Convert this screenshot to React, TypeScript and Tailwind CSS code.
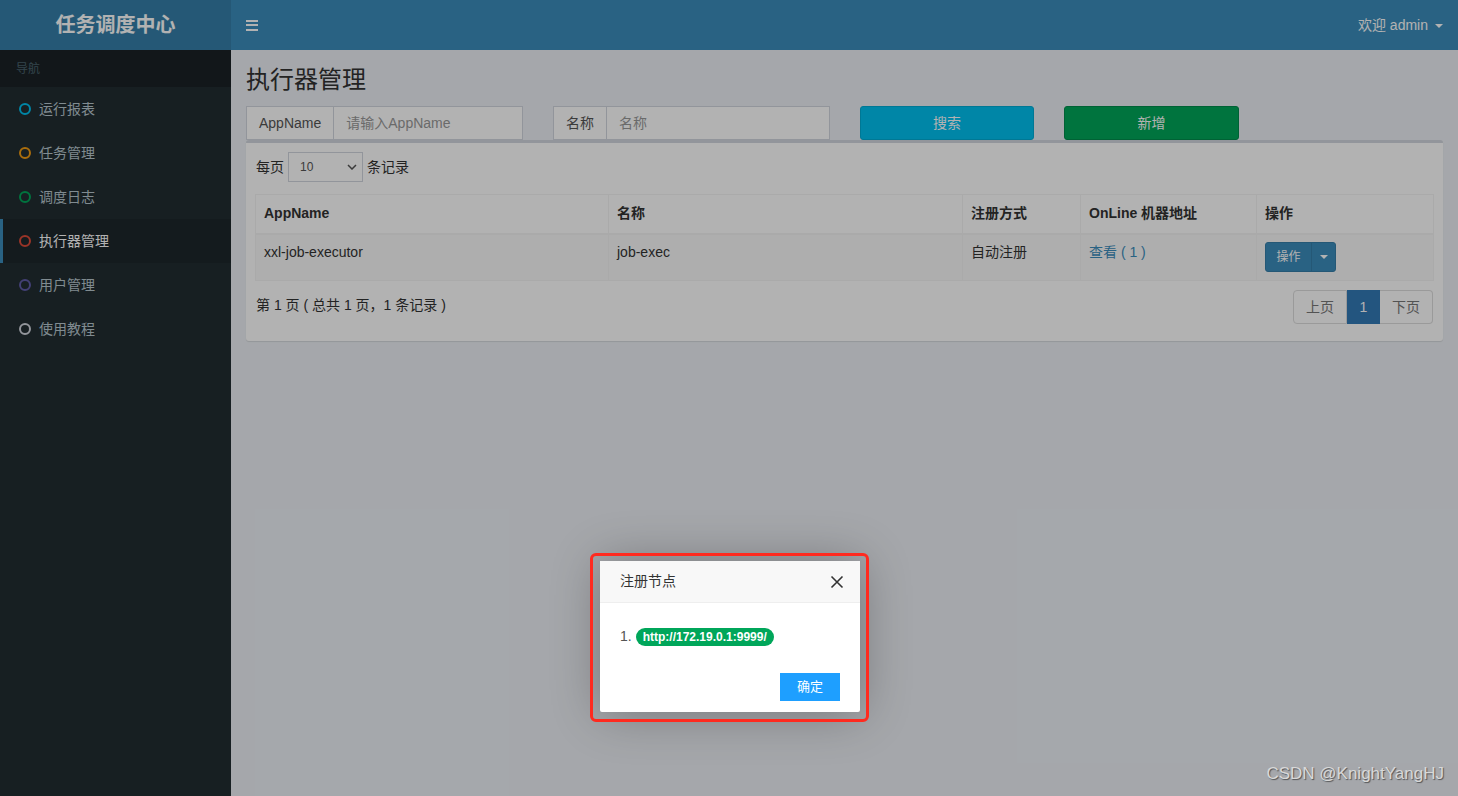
import React from "react";

const font = { fontFamily: '"Liberation Sans", "Noto Sans CJK SC", sans-serif' };

const navItems = [
  { label: "运行报表", ring: "border-[#00c0ef]" },
  { label: "任务管理", ring: "border-[#f39c12]" },
  { label: "调度日志", ring: "border-[#00a65a]" },
  { label: "执行器管理", ring: "border-[#dd4b39]", active: true },
  { label: "用户管理", ring: "border-[#605ca8]" },
  { label: "使用教程", ring: "border-[#d2d6de]" },
];

function Sidebar() {
  return (
    <aside className="w-[231px] shrink-0 bg-[#222d32] flex flex-col">
      <div className="h-[50px] bg-[#367fa9] flex items-center justify-center text-white text-[20px] font-bold">
        任务调度中心
      </div>
      <div className="h-[37px] bg-[#1a2226] text-[#4b646f] text-[12px] flex items-center pl-[16px]">导航</div>
      <ul>
        {navItems.map((item) => (
          <li
            key={item.label}
            className={
              "h-[44px] flex items-center text-[14px] border-l-[3px] " +
              (item.active
                ? "bg-[#1e282c] border-[#3c8dbc] text-white"
                : "border-transparent text-[#b8c7ce]")
            }
          >
            <span className={"ml-[16px] w-[12px] h-[12px] rounded-full border-2 " + item.ring}></span>
            <span className="ml-[8px]">{item.label}</span>
          </li>
        ))}
      </ul>
    </aside>
  );
}

function TopBar() {
  return (
    <header className="h-[50px] bg-[#3c8dbc] flex items-center justify-between pl-[15px] pr-[15px] text-white">
      <div className="flex flex-col gap-[2.5px] w-[12px]">
        <span className="h-[2px] bg-white"></span>
        <span className="h-[2px] bg-white"></span>
        <span className="h-[2px] bg-white"></span>
      </div>
      <div className="flex items-center text-[14px] gap-[7px]">
        <span>欢迎 admin</span>
        <span className="w-0 h-0 border-l-[4px] border-r-[4px] border-t-[4px] border-l-transparent border-r-transparent border-t-white mt-[1px]"></span>
      </div>
    </header>
  );
}

function SearchRow() {
  return (
    <div className="flex items-stretch h-[34px] text-[14px]">
      <div className="w-[277px] flex border border-[#d2d6de] bg-white">
        <span className="px-[12px] flex items-center border-r border-[#d2d6de] text-[#555]">AppName</span>
        <span className="px-[12px] flex items-center text-[#999]">请输入AppName</span>
      </div>
      <div className="w-[277px] ml-[30px] flex border border-[#d2d6de] bg-white">
        <span className="px-[12px] flex items-center border-r border-[#d2d6de] text-[#555]">名称</span>
        <span className="px-[12px] flex items-center text-[#999]">名称</span>
      </div>
      <button className="w-[174px] ml-[30px] bg-[#00c0ef] border border-[#00acd6] rounded-[3px] text-white">搜索</button>
      <button className="w-[175px] ml-[30px] bg-[#00a65a] border border-[#008d4c] rounded-[3px] text-white">新增</button>
    </div>
  );
}

function Table() {
  const th = "border border-[#f4f4f4] border-b-2 text-left font-bold px-[8px] h-[39px]";
  const td = "border border-[#f4f4f4] px-[8px] pt-[7px] align-top h-[47px]";
  return (
    <table className="w-full border-collapse border border-[#f4f4f4] text-[14px] text-[#333] mt-[12px] table-fixed">
      <colgroup>
        <col className="w-[353px]" />
        <col className="w-[354px]" />
        <col className="w-[118px]" />
        <col className="w-[176px]" />
        <col className="w-[177px]" />
      </colgroup>
      <thead>
        <tr>
          <th className={th}>AppName</th>
          <th className={th}>名称</th>
          <th className={th}>注册方式</th>
          <th className={th}>OnLine 机器地址</th>
          <th className={th}>操作</th>
        </tr>
      </thead>
      <tbody>
        <tr className="bg-[#f9f9f9]">
          <td className={td}>xxl-job-executor</td>
          <td className={td}>job-exec</td>
          <td className={td}>自动注册</td>
          <td className={td}>
            <span className="text-[#3c8dbc]">查看 ( 1 )</span>
          </td>
          <td className="border border-[#f4f4f4] px-[8px] align-top pt-[7px]">
            <div className="inline-flex h-[30px] rounded-[3px] overflow-hidden bg-[#3c8dbc] text-white text-[12px] border border-[#367fa9]">
              <span className="w-[45px] flex items-center justify-center">操作</span>
              <span className="w-[24px] flex items-center justify-center border-l border-[#367fa9]">
                <span className="w-0 h-0 border-l-[4px] border-r-[4px] border-t-[4px] border-l-transparent border-r-transparent border-t-white"></span>
              </span>
            </div>
          </td>
        </tr>
      </tbody>
    </table>
  );
}

function Box() {
  return (
    <div className="bg-white border-t-[3px] border-[#d2d6de] rounded-[3px] shadow-[0_1px_1px_rgba(0,0,0,0.1)] px-[9px] pt-[9px] pb-[17px] text-[14px] text-[#333]">
      <div className="flex items-center gap-[4px] ml-[1px]">
        <span>每页</span>
        <div className="w-[75px] h-[30px] border border-[#d2d6de] flex items-center justify-between pl-[11px] pr-[5px] text-[12px] text-[#555]">
          <span>10</span>
          <svg width="10" height="6" viewBox="0 0 10 6" fill="none" stroke="#555" strokeWidth="1.5">
            <path d="M1 1l4 4 4-4" />
          </svg>
        </div>
        <span>条记录</span>
      </div>
      <Table />
      <div className="flex items-center justify-between mt-[9px]">
        <span className="ml-[1px] -mt-[3px]">第 1 页 ( 总共 1 页，1 条记录 )</span>
        <div className="flex h-[34px] text-[14px] mr-[1px]">
          <span className="w-[54px] flex items-center justify-center border border-[#ddd] rounded-l-[4px] text-[#777]">上页</span>
          <span className="w-[33px] flex items-center justify-center bg-[#337ab7] border border-[#337ab7] text-white">1</span>
          <span className="w-[53px] flex items-center justify-center border border-[#ddd] border-l-0 rounded-r-[4px] text-[#777]">下页</span>
        </div>
      </div>
    </div>
  );
}

function Modal() {
  return (
    <>
      <div className="absolute left-[590px] top-[553px] w-[279px] h-[169px] border-[3px] border-[#ff2a1f] rounded-[6px] z-30"></div>
      <div className="absolute left-[600px] top-[561px] w-[260px] h-[151px] bg-white rounded-[2px] shadow-[1px_1px_50px_rgba(0,0,0,0.3)] z-20 flex flex-col">
        <div className="h-[42px] bg-[#f8f8f8] border-b border-[#eee] flex items-center justify-between pl-[20px] pr-[16px] text-[14px] text-[#333]">
          <span>注册节点</span>
          <svg width="14" height="14" viewBox="0 0 14 14" stroke="#333" strokeWidth="1.6">
            <path d="M1.5 1.5l11 11M12.5 1.5l-11 11" />
          </svg>
        </div>
        <div className="flex items-center pl-[20px] mt-[23px] text-[14px] text-[#555]">
          <span>1.</span>
          <span className="ml-[4px] h-[18px] px-[7px] rounded-full bg-[#00a65a] text-white text-[12px] font-bold flex items-center">
            http://172.19.0.1:9999/
          </span>
        </div>
        <div className="flex justify-end mt-[26px] pr-[20px]">
          <button className="w-[60px] h-[28px] bg-[#1e9fff] text-white text-[13px]">确定</button>
        </div>
      </div>
    </>
  );
}

export default function App() {
  return (
    <div className="relative w-[1458px] h-[796px] overflow-hidden flex" style={font}>
      <Sidebar />
      <div className="flex-1 flex flex-col bg-[#ecf0f5]">
        <TopBar />
        <div className="px-[15px]">
          <h1 className="text-[24px] text-[#333] h-[56px] flex items-center pt-[3px]">执行器管理</h1>
          <SearchRow />
          <Box />
        </div>
      </div>
      <div className="absolute inset-0 bg-black/30 z-10"></div>
      <Modal />
      <div className="absolute right-[14px] bottom-[10px] z-40 text-[17px] text-[#d8d8d8] [text-shadow:1px_1px_1px_rgba(0,0,0,0.5)]">
        CSDN @KnightYangHJ
      </div>
    </div>
  );
}
